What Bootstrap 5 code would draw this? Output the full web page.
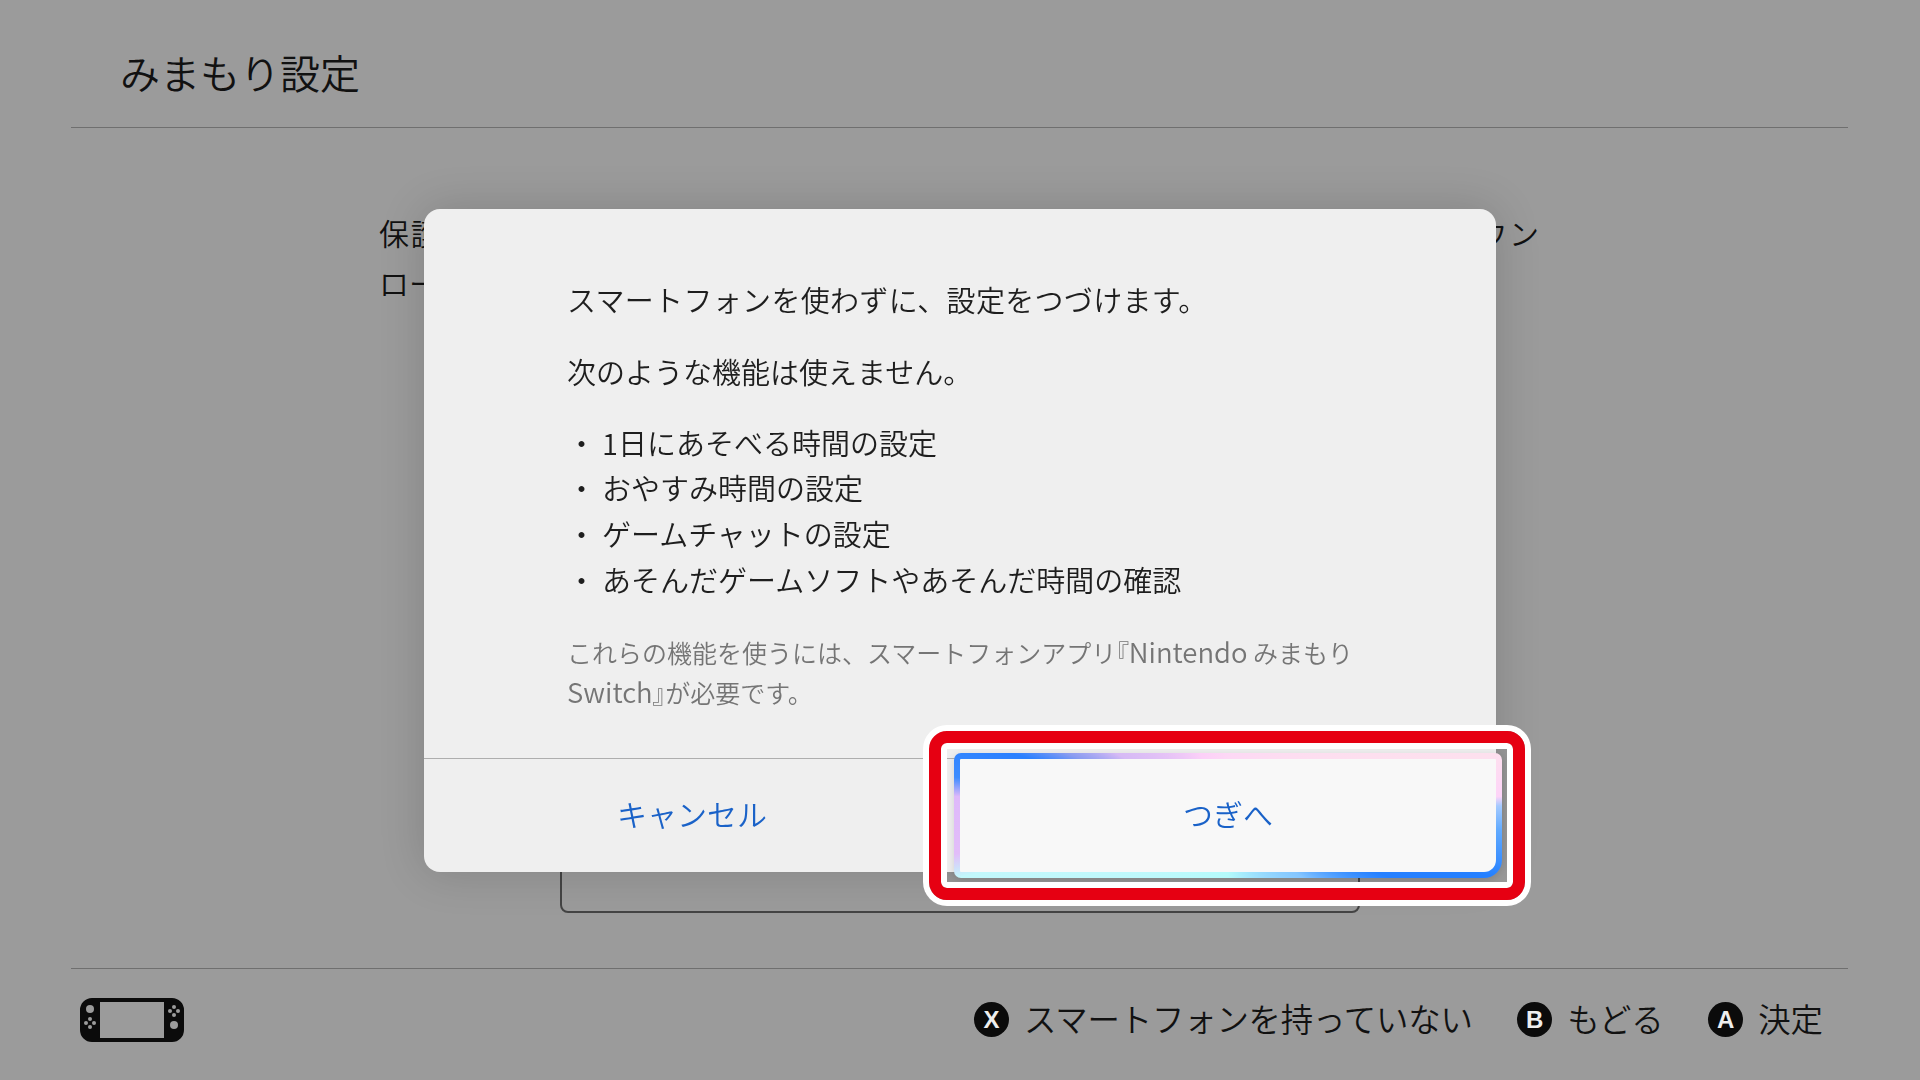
<!DOCTYPE html>
<html lang="ja">
<head>
<meta charset="utf-8">
<title>みまもり設定</title>
<link href="https://cdn.jsdelivr.net/npm/bootstrap@5.3.0/dist/css/bootstrap.min.css" rel="stylesheet">
<style>
html, body { height: 100%; }
body { background: #9b9b9b; color: #111; overflow: hidden; font-family: "Noto Sans CJK JP", "Noto Sans", sans-serif; font-weight: 350; }
.shell { width: 1920px; height: 1080px; }
.top-bar { height: 128px; margin: 0 72px 0 71px; padding-left: 49px; border-bottom: 1px solid #6f6f6f; }
.top-bar h1 { font-size: 40px; font-weight: 350; margin: 0; padding-top: 47px; line-height: 50px; }
.main-area { padding-top: 79px; }
.intro { width: 1160px; margin-right: 2px; font-size: 30px; line-height: 50px; height: 102px; overflow: hidden; }
.intro-first { text-align: justify; text-align-last: justify; white-space: nowrap; }
.ghost-box { width: 800px; height: 573px; margin-top: 31px; border: 2px solid #444; border-radius: 8px; }
.bottom-bar { height: 112px; margin: 0 72px 0 71px; padding: 0 25px 10px 9px; border-top: 1px solid #6f6f6f; }
.hint { font-size: 32.4px; gap: 15px; line-height: 1; }
.hint-wide { letter-spacing: -.15px; }
.hint-label { padding-bottom: 2px; }
.hints { gap: 44.5px; }
.btn-dot { width: 35px; height: 35px; background: #0b0b0b; color: #eee; font: 700 24px/35px "Liberation Sans", sans-serif; letter-spacing: 0; text-align: center; flex: none; }
.dialog-box { width: 1072px; height: 663px; background: #efefef; border-radius: 16px; box-shadow: 0 0 46px rgba(0,0,0,.16); color: #1e1e1e; }
.dialog-body { padding: 68px 143px 0; height: 549px; font-size: 29px; line-height: 45px; }
.dialog-body p { margin: 0 0 27px; }
.opening-line { letter-spacing: .33px; }
.feat-list { margin: -1px 0 29px; line-height: 45.8px; }
.feat-dot { width: 35px; flex: none; text-align: center; padding-right: 7px; }
.fine { color: #757575; font-size: 25px; line-height: 40px; white-space: nowrap; }
.lat { font-size: 27.5px; line-height: 1; }
.brk { font-feature-settings: "palt"; }
.dialog-foot { height: 114px; border-top: 1px solid #aeaeae; }
.dialog-foot > div { width: 536px; }
.act { color: #1a62c8; font-size: 30px; background: none; border: 0; padding: 0 0 4px; font-weight: 350; }
.next-btn { display: block; margin: -6px -6px -5px; width: 548px; height: 125px; border: 6px solid transparent; border-radius: 7px 7px 18px 7px;
  background: linear-gradient(#f8f8f8, #f8f8f8) padding-box,
    conic-gradient(from 0deg, #fdd8f5 0deg, #fde0ee 77deg, #fdd4f8 86deg, #a4caff 88deg, #62abff 93deg, #2580ff 103deg, #2580ff 111deg, #85c6ff 130deg, #b4fbfb 180deg, #c2f8fb 257deg, #e2bdf9 262deg, #deb9fa 274deg, #3d8cff 278deg, #2a80ff 286deg, #8a9cf0 291deg, #d6baf5 299deg, #fcd0f8 336deg, #fdd8f5 360deg) border-box;
  box-shadow: 0 2px 8px rgba(0,0,0,.12); }
.mark-frame { top: -28px; bottom: -28px; left: -31px; right: -29px; border: 12px solid #e60012; border-radius: 18px; box-shadow: 0 0 0 6px #fff, inset 0 0 0 6px #fff; pointer-events: none; }
</style>
</head>
<body>
<div class="shell d-flex flex-column">
  <header class="top-bar"><h1>みまもり設定</h1></header>
  <main class="main-area flex-grow-1 d-flex flex-column align-items-center">
    <div class="intro"><div class="intro-first">保護者の方のスマートフォンに専用アプリ『Nintendo みまもり Switch』をダウン</div><div>ロードしてください。</div></div>
    <div class="ghost-box"></div>
  </main>
  <footer class="bottom-bar d-flex align-items-center justify-content-between">
    <svg width="104" height="44" viewBox="0 0 104 44" aria-hidden="true">
      <path fill="#0b0b0b" fill-rule="evenodd" d="M12 0H92A12 12 0 0 1 104 12V32A12 12 0 0 1 92 44H12A12 12 0 0 1 0 32V12A12 12 0 0 1 12 0ZM20 4V40H84V4Z"/>
      <g fill="#9b9b9b">
        <circle cx="10" cy="11" r="4"/><circle cx="94" cy="27" r="4"/>
        <circle cx="6" cy="25" r="2"/><circle cx="14" cy="25" r="2"/><circle cx="10" cy="21" r="2"/><circle cx="10" cy="29" r="2"/>
        <circle cx="90" cy="13" r="2"/><circle cx="98" cy="13" r="2"/><circle cx="94" cy="9" r="2"/><circle cx="94" cy="17" r="2"/>
      </g>
    </svg>
    <div class="hints d-flex align-items-center">
      <div class="hint hint-wide d-flex align-items-center"><span class="btn-dot rounded-circle">X</span><span class="hint-label">スマートフォンを持っていない</span></div>
      <div class="hint d-flex align-items-center"><span class="btn-dot rounded-circle">B</span><span class="hint-label">もどる</span></div>
      <div class="hint d-flex align-items-center"><span class="btn-dot rounded-circle">A</span><span class="hint-label">決定</span></div>
    </div>
  </footer>
</div>

<div class="position-fixed top-0 start-0 w-100 h-100 d-flex align-items-center justify-content-center">
  <div class="dialog-box d-flex flex-column">
    <div class="dialog-body">
      <p class="opening-line">スマートフォンを使わずに、設定をつづけます。</p>
      <p>次のような機能は使えません。</p>
      <ul class="feat-list list-unstyled">
        <li class="d-flex"><span class="feat-dot">・</span><span>1日にあそべる時間の設定</span></li>
        <li class="d-flex"><span class="feat-dot">・</span><span>おやすみ時間の設定</span></li>
        <li class="d-flex"><span class="feat-dot">・</span><span>ゲームチャットの設定</span></li>
        <li class="d-flex"><span class="feat-dot">・</span><span>あそんだゲームソフトやあそんだ時間の確認</span></li>
      </ul>
      <div class="fine">これらの機能を使うには、スマートフォンアプリ<span class="brk">『</span><span class="lat">Nintendo</span> みまもり<br><span class="lat">Switch</span><span class="brk">』</span>が必要です。</div>
    </div>
    <div class="dialog-foot d-flex">
      <div class="d-flex align-items-center justify-content-center"><button type="button" class="act">キャンセル</button></div>
      <div class="position-relative">
        <button type="button" class="act next-btn">つぎへ</button>
        <span class="mark-frame position-absolute"></span>
      </div>
    </div>
  </div>
</div>
<script src="https://cdn.jsdelivr.net/npm/bootstrap@5.3.0/dist/js/bootstrap.bundle.min.js"></script>
</body>
</html>
